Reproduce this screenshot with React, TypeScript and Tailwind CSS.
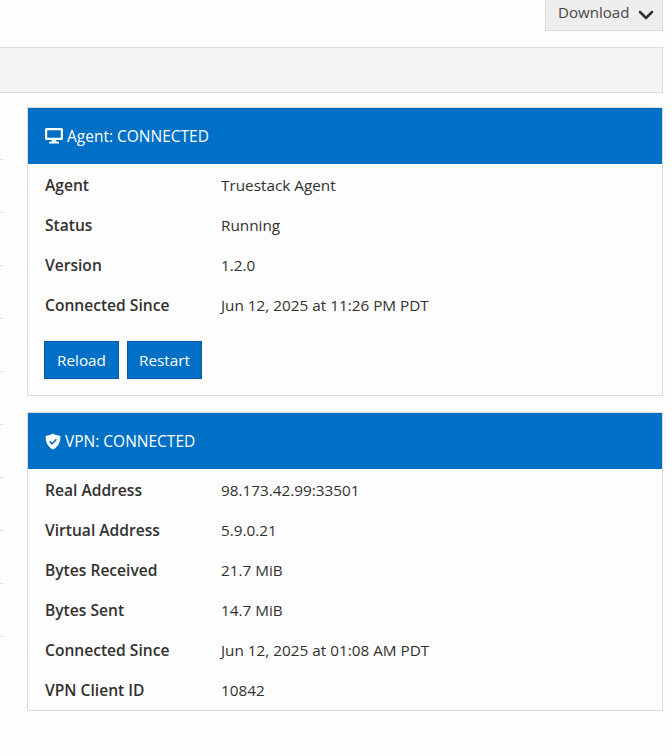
import { ChevronDown } from 'lucide-react';

const agentRows = [
  ['Agent', 'Truestack Agent'],
  ['Status', 'Running'],
  ['Version', '1.2.0'],
  ['Connected Since', 'Jun 12, 2025 at 11:26 PM PDT'],
];

const vpnRows = [
  ['Real Address', '98.173.42.99:33501'],
  ['Virtual Address', '5.9.0.21'],
  ['Bytes Received', '21.7 MiB'],
  ['Bytes Sent', '14.7 MiB'],
  ['Connected Since', 'Jun 12, 2025 at 01:08 AM PDT'],
  ['VPN Client ID', '10842'],
];

// edge of the table that is cut off on the left of the page
const cutOffRows = [0, 1, 2, 3, 4, 5, 6, 7, 8, 9];

function Rows({ rows }: { rows: string[][] }) {
  return (
    <div className="flex flex-col">
      {rows.map(([label, value]) => (
        <div key={label} className="flex h-10 items-center pl-[17px] text-[#323130]">
          <div className="w-[176px] pt-[2px] text-[15.6px] font-semibold">{label}</div>
          <div>{value}</div>
        </div>
      ))}
    </div>
  );
}

function CardHeader({ icon, title }: { icon: React.ReactNode; title: string }) {
  return (
    <div className="flex h-[56px] items-center gap-[4px] bg-[#0070c6] pl-[17px] text-[15.5px] text-white">
      {icon}
      <span className="pt-[2px]">{title}</span>
    </div>
  );
}

function MonitorIcon() {
  return (
    <svg width="18" height="16" viewBox="0 0 18 16" fill="white">
      <path d="M1.5 0h15A1.5 1.5 0 0 1 18 1.500v9A1.500 1.500 0 0 1 16.500 12h-15A1.500 1.500 0 0 1 0 10.500v-9A1.500 1.500 0 0 1 1.500 0zM2.200 2.200v7.600h13.600V2.200z" fillRule="evenodd" />
      <path d="M6.800 12h4.400l0.300 1.800h2.500v1.700H4v-1.700h2.500z" />
    </svg>
  );
}

function ShieldIcon() {
  return (
    <svg width="16" height="17" viewBox="0 0 16 17">
      <path d="M8 0.500c2 1.300 4.500 2.200 7.300 2.400 0.400 5.800-1.800 10.800-7.300 13.600C2.500 13.700 0.300 8.700 0.700 2.900 3.500 2.700 6 1.800 8 0.500z" fill="white" />
      <path d="M4.700 8.400l2.400 2.400 4.300-4.600" fill="none" stroke="#0070c6" strokeWidth="1.600" />
    </svg>
  );
}

export default function App() {
  return (
    <div className="flex min-h-[756px] flex-col bg-[#fdfdfd] pr-[9px] font-['Open_Sans',sans-serif] text-[15.3px]">
      <div className="flex justify-end">
        <button className="flex h-[31px] w-[118px] items-center gap-[4px] border-r border-b border-l border-[#dcdcdc] bg-[#eeeeee] pl-[12px] text-[15.1px] text-[#484644]">
          <span className="pb-[5px]">Download</span>
          <ChevronDown size={24} strokeWidth={2.500} className="text-[#323130]" />
        </button>
      </div>

      <div className="mt-4 h-[46px] border-y border-r border-[#dcdcdc] bg-[#f3f3f3]" />

      <div className="mt-[14px] flex">
        <div className="mr-[24px] w-[3px]">
          {cutOffRows.map((row) => (
            <div key={row} className="h-[53px] border-b border-[#dcdcdc]" />
          ))}
        </div>

        <div className="flex flex-1 flex-col gap-4">
          <section className="border border-[#dcdcdc]">
            <CardHeader icon={<MonitorIcon />} title="Agent: CONNECTED" />
            <div className="pt-[1px]">
              <Rows rows={agentRows} />
            </div>
            <div className="flex gap-2 pt-4 pb-4 pl-4">
              <button className="h-[38px] w-[75px] border border-[#005ba1] bg-[#0070c6] text-white">Reload</button>
              <button className="h-[38px] w-[75px] border border-[#005ba1] bg-[#0070c6] text-white">Restart</button>
            </div>
          </section>

          <section className="border border-[#dcdcdc]">
            <CardHeader icon={<ShieldIcon />} title="VPN: CONNECTED" />
            <div className="pt-[1px]">
              <Rows rows={vpnRows} />
            </div>
          </section>
        </div>
      </div>
    </div>
  );
}
